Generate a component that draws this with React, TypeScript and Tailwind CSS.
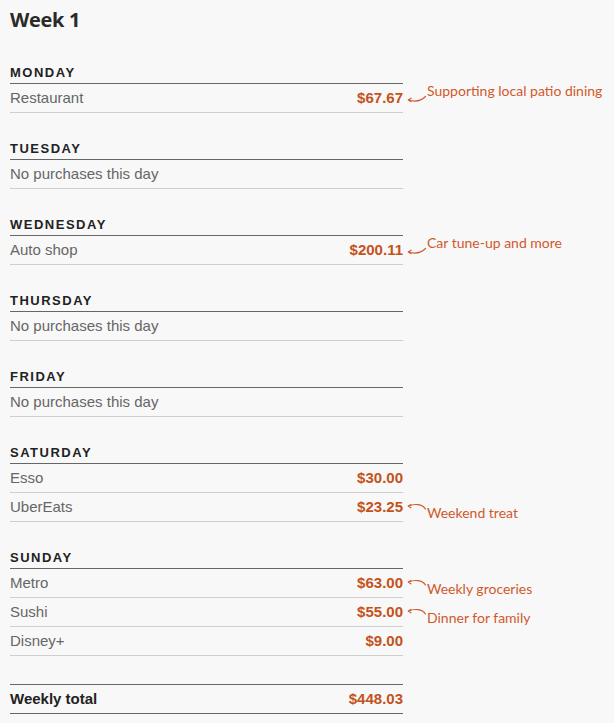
import React from 'react'

type Note = { text: string; dir: 'up' | 'down' }

interface Item {
  name: string
  amount: string
  note?: Note
}

interface Day {
  day: string
  items: Item[]
}

const week: Day[] = [
  { day: 'Monday', items: [{ name: 'Restaurant', amount: '$67.67', note: { text: 'Supporting local patio dining', dir: 'up' } }] },
  { day: 'Tuesday', items: [] },
  { day: 'Wednesday', items: [{ name: 'Auto shop', amount: '$200.11', note: { text: 'Car tune-up and more', dir: 'up' } }] },
  { day: 'Thursday', items: [] },
  { day: 'Friday', items: [] },
  {
    day: 'Saturday',
    items: [
      { name: 'Esso', amount: '$30.00' },
      { name: 'UberEats', amount: '$23.25', note: { text: 'Weekend treat', dir: 'down' } },
    ],
  },
  {
    day: 'Sunday',
    items: [
      { name: 'Metro', amount: '$63.00', note: { text: 'Weekly groceries', dir: 'down' } },
      { name: 'Sushi', amount: '$55.00', note: { text: 'Dinner for family', dir: 'down' } },
      { name: 'Disney+', amount: '$9.00' },
    ],
  },
]

const sans = "font-['Liberation_Sans',Arial,sans-serif]"

function Annotation({ note }: { note: Note }) {
  const up = note.dir === 'up'
  return (
    <div className="absolute left-full top-0 h-full w-[210px] pointer-events-none">
      <svg
        className="absolute left-[3px] top-[6px]"
        width="22"
        height="16"
        viewBox="0 0 22 16"
        fill="none"
        stroke="#d0592c"
        strokeWidth="1.2"
        strokeLinecap="round"
      >
        {up ? (
          <>
            <path d="M2.5 10 C 9 12, 15 11, 19.5 6.5" />
            <path d="M5 8.2 L2.5 10 L5 11.6" />
          </>
        ) : (
          <>
            <path d="M2.5 7 C 9 4.5, 16 5, 19.5 10" />
            <path d="M5 5.4 L2.5 7 L4.8 8.8" />
          </>
        )}
      </svg>
      <span
        className={`absolute left-[24px] whitespace-nowrap font-['Lato',sans-serif] text-[14px] leading-[18px] text-[#d0592c] ${
          up ? 'top-[-2px]' : 'top-[11px]'
        }`}
      >
        {note.text}
      </span>
    </div>
  )
}

function Row({ item }: { item: Item }) {
  return (
    <div className="relative flex h-[29px] items-center justify-between border-b border-[#cfcfcf]">
      <span className={`${sans} text-[15px] text-[#666]`}>{item.name}</span>
      <span className={`${sans} text-[15px] font-bold text-[#c4521c]`}>{item.amount}</span>
      {item.note && <Annotation note={item.note} />}
    </div>
  )
}

export default function App() {
  const total = '$448.03'
  return (
    <div className="min-h-screen bg-[#f8f8f8] pl-[10px] pt-[6px]">
      <h1 className="font-['Open_Sans',sans-serif] text-[20px] font-bold leading-[28px] tracking-[-0.3px] text-[#2a2a2a]">Week 1</h1>

      <div className="w-[393px]">
        {week.map((d, i) => (
          <section key={d.day} className={i === 0 ? 'mt-[30px]' : 'mt-[27px]'}>
            <h2
              className={`${sans} border-b border-[#666] pt-px pb-[2px] text-[13px] font-bold uppercase leading-[16px] tracking-[1.5px] text-[#222]`}
            >
              {d.day}
            </h2>
            {d.items.length === 0 ? (
              <div className="flex h-[29px] items-center border-b border-[#cfcfcf]">
                <span className={`${sans} text-[15px] text-[#666]`}>No purchases this day</span>
              </div>
            ) : (
              d.items.map((item) => <Row key={item.name} item={item} />)
            )}
          </section>
        ))}

        {/* Weekly total */}
        <div className="mt-[28px] flex h-[30px] items-center justify-between border-y border-[#666]">
          <span className={`${sans} text-[15px] font-bold text-[#222]`}>Weekly total</span>
          <span className={`${sans} text-[15px] font-bold text-[#c4521c]`}>{total}</span>
        </div>
      </div>
    </div>
  )
}
